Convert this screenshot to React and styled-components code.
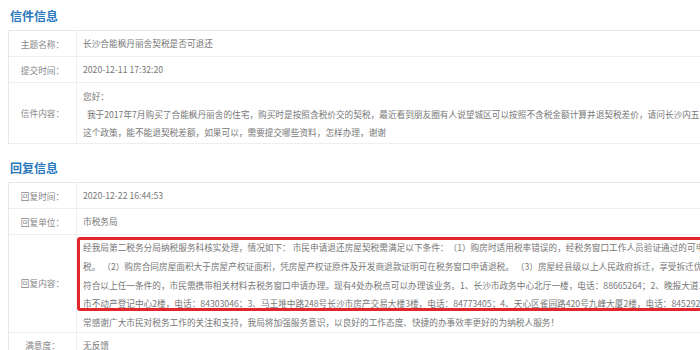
import React from "react";
import styled, { createGlobalStyle } from "styled-components";

const GlobalStyle = createGlobalStyle`
  html, body {
    margin: 0;
    padding: 0;
    background: #fff;
    overflow: hidden;
  }
  body {
    font-family: "Noto Sans CJK SC", "Noto Sans", sans-serif;
    text-spacing-trim: space-all;
  }
`;

const Page = styled.div`
  width: 1100px;
`;

const SectionTitle = styled.h2`
  margin: ${(p) => (p.$spaced ? "8px" : "0")} 0 0;
  height: 30px;
  display: flex;
  align-items: center;
  padding-left: 10px;
  font-size: 12px;
  font-weight: 700;
  color: #2b78bb;
`;

const Table = styled.div`
  margin-left: 8px;
  border: 1px solid #e8e8e8;
  border-bottom: none;
  font-size: 8.66px;
`;

const Row = styled.div`
  display: grid;
  grid-template-columns: 68px 1fr;
  border-bottom: 1px solid #eeeeee;
`;

const Label = styled.div`
  display: flex;
  align-items: center;
  justify-content: center;
  border-right: 1px solid #eeeeee;
  color: #888;
  white-space: nowrap;
`;

const Value = styled.div`
  position: relative;
  padding: ${(p) => p.$pad || "3px 6px"};
  line-height: ${(p) => p.$lh || "19px"};
  color: #777;
  white-space: nowrap;
  overflow: hidden;
`;

const Line = styled.div``;

const Highlight = styled.div`
  position: absolute;
  top: 2px;
  left: 0;
  width: 900px;
  height: 74px;
  box-sizing: border-box;
  border: 3px solid #e3262b;
  border-radius: 3px;
  pointer-events: none;
`;

const Field = ({ label, children, pad, lh }) => (
  <Row>
    <Label>{label}</Label>
    <Value $pad={pad} $lh={lh}>
      {children}
    </Value>
  </Row>
);

const letterLines = [
  "您好：",
  "\u00a0\u00a0我于2017年7月购买了合能枫丹丽舍的住宅，购买时是按照含税价交的契税，最近看到朋友圈有人说望城区可以按照不含税金额计算并退契税差价，请问长沙内五区有没有",
  "这个政策，能不能退契税差额，如果可以，需要提交哪些资料，怎样办理，谢谢",
];

const replyLines = [
  "经我局第二税务分局纳税服务科核实处理，情况如下： 市民申请退还房屋契税需满足以下条件：（1）购房时适用税率错误的，经税务窗口工作人员验证通过的可申请退",
  "税。 （2）购房合同房屋面积大于房屋产权证面积，凭房屋产权证原件及开发商退款证明可在税务窗口申请退税。 （3）房屋经县级以上人民政府拆迁，享受拆迁优惠政策的。",
  "符合以上任一条件的，市民需携带相关材料去税务窗口申请办理。现有4处办税点可以办理该业务。1、长沙市政务中心北厅一楼，电话：88665264；2、晚报大道1号",
  "市不动产登记中心2楼，电话：84303046；3、马王堆中路248号长沙市房产交易大楼3楼，电话：84773405；4、天心区雀园路420号九峰大厦2楼，电话：84529200。非",
  "常感谢广大市民对税务工作的关注和支持，我局将加强服务意识，以良好的工作态度、快捷的办事效率更好的为纳税人服务！",
];

export default function App() {
  return (
    <Page>
      <GlobalStyle />
      <SectionTitle>信件信息</SectionTitle>
      <Table>
        <Field label="主题名称：">长沙合能枫丹丽舍契税是否可退还</Field>
        <Field label="提交时间：">2020-12-11 17:32:20</Field>
        <Field label="信件内容：" pad="4px 6px 2px" lh="18px">
          {letterLines.map((t, i) => (
            <Line key={i}>{t}</Line>
          ))}
        </Field>
      </Table>

      <SectionTitle $spaced>回复信息</SectionTitle>
      <Table>
        <Field label="回复时间：">2020-12-22 16:44:53</Field>
        <Field label="回复单位：">市税务局</Field>
        <Field label="回复内容：" pad="3px 6px 0" lh="18.75px">
          {replyLines.map((t, i) => (
            <Line key={i}>{t}</Line>
          ))}
          <Highlight />
        </Field>
        <Field label="满意度：">无反馈</Field>
      </Table>
    </Page>
  );
}
